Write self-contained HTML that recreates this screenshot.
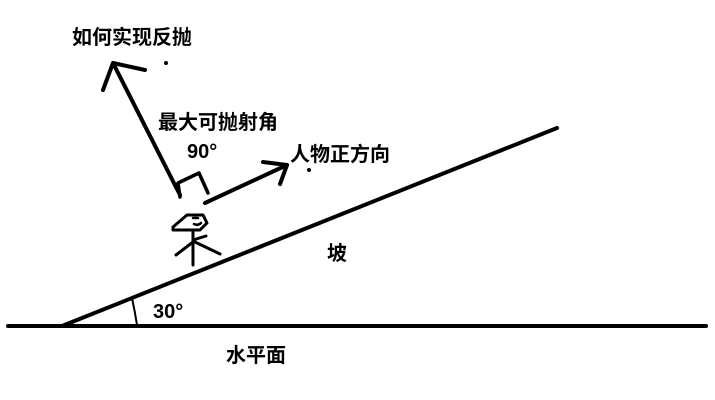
<!DOCTYPE html>
<html><head><meta charset="utf-8"><style>
body{margin:0;width:715px;height:400px;background:#fff;overflow:hidden;position:relative}
.t{position:absolute;font-family:"Liberation Sans","Noto Sans CJK SC",sans-serif;font-weight:bold;font-size:20px;line-height:22px;color:#000;white-space:nowrap}
svg{position:absolute;left:0;top:0}
</style></head><body>
<svg width="715" height="400" viewBox="0 0 715 400" fill="none" stroke="#000" stroke-linecap="round" stroke-linejoin="round">
<line x1="8" y1="326" x2="706" y2="326" stroke-width="4"/>
<line x1="62" y1="326" x2="557" y2="128" stroke-width="4"/>
<path d="M132 298 Q135 312 137 325" stroke-width="2"/>
<path d="M180 195 L113 63" stroke-width="4"/>
<path d="M103 90 L113 63 L145 70" stroke-width="4"/>
<path d="M180 197 L178 183 L199 173 L208 193" stroke-width="3.5"/>
<path d="M205 203 L287 165" stroke-width="4"/>
<path d="M263 162 L287 165 L280 184" stroke-width="4"/>
<circle cx="166" cy="63" r="2" fill="#000" stroke="none"/>
<circle cx="309" cy="170" r="2" fill="#000" stroke="none"/>
<path d="M173 227 L187 215 L203 215 L207 223 L200 230 L173 230 Z" stroke-width="3"/>
<path d="M193 218 L198 218 M194 224 Q198 226 201 223" stroke-width="2.5"/>
<path d="M193 232 L193 265 M193 242 L176 255 M193 240 L206 236 M195 242 L220 254" stroke-width="3"/>
</svg>
<div class="t" style="left:72px;top:27px">如何实现反抛</div>
<div class="t" style="left:158px;top:112px">最大可抛射角</div>
<div class="t" style="left:187px;top:141px">90°</div>
<div class="t" style="left:290px;top:144px">人物正方向</div>
<div class="t" style="left:327px;top:243px">坡</div>
<div class="t" style="left:153px;top:301px">30°</div>
<div class="t" style="left:226px;top:345px">水平面</div>
</body></html>
